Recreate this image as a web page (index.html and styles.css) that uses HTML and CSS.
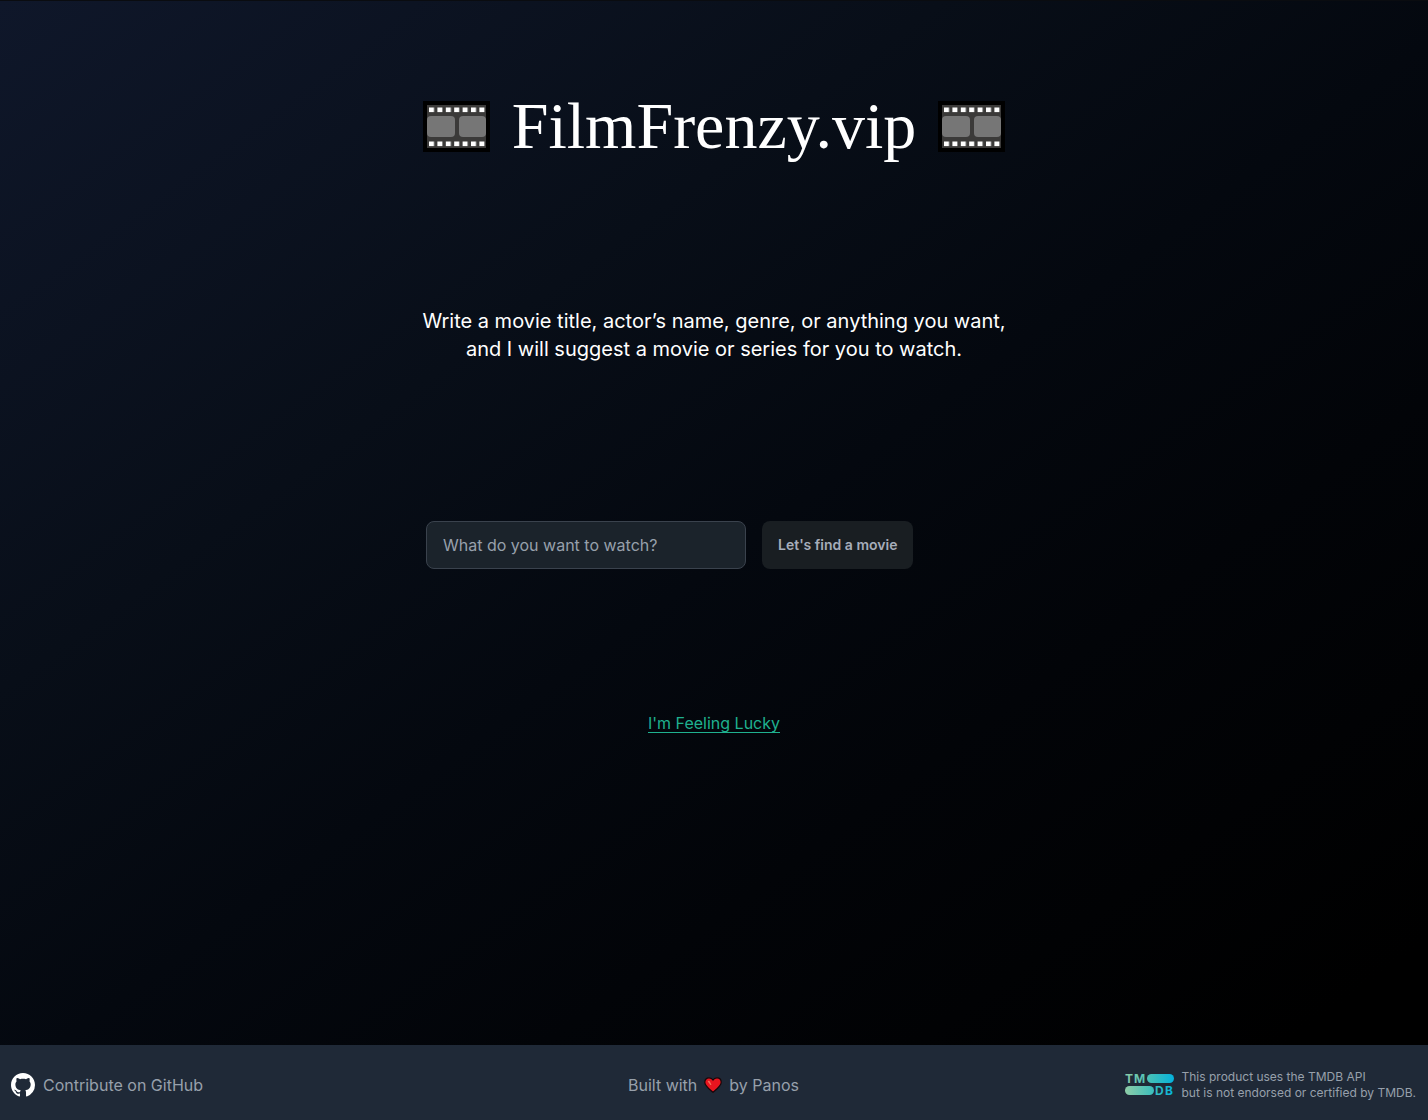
FILE: index.html
```html
<!DOCTYPE html>
<html lang="en">
<head>
<meta charset="utf-8">
<meta name="viewport" content="width=device-width, initial-scale=1">
<title>FilmFrenzy.vip</title>
<link rel="stylesheet" href="styles.css">
</head>
<body>
<svg class="defs" aria-hidden="true">
  <defs>
    <pattern id="holes" width="8.4" height="34" patternUnits="userSpaceOnUse" x="6" y="6">
      <rect width="5" height="4.6" y=".5" fill="#fff"/>
    </pattern>
    <symbol id="film" viewBox="0 0 67 51">
      <rect width="67" height="51" fill="#000"/>
      <rect x="4" y="4" width="59" height="43" fill="#3b3a39"/>
      <rect x="4" y="15" width="28" height="21" rx="4" fill="#767676"/>
      <rect x="36" y="15" width="27" height="21" rx="4" fill="#767676"/>
      <rect x="6" y="6" width="56" height="6" fill="url(#holes)"/>
      <rect x="6" y="40" width="56" height="6" fill="url(#holes)"/>
    </symbol>
    <linearGradient id="tmdb" gradientUnits="userSpaceOnUse" x1="0" y1="0" x2="49" y2="0">
      <stop offset="0" stop-color="#8fcda7"/>
      <stop offset=".56" stop-color="#3dbebb"/>
      <stop offset="1" stop-color="#04b2dd"/>
    </linearGradient>
  </defs>
</svg>
<main class="main">
  <h1 class="title">
    <svg class="film" aria-hidden="true"><use href="#film"/></svg>
    <span>FilmFrenzy.vip</span>
    <svg class="film" aria-hidden="true"><use href="#film"/></svg>
  </h1>
  <p class="intro">Write a movie title, actor’s name, genre, or anything you want,<br>and I will suggest a movie or series for you to watch.</p>
  <form class="search">
    <input class="field" type="text" placeholder="What do you want to watch?" aria-label="What do you want to watch?">
    <button class="find" type="button">Let's find a movie</button>
  </form>
  <a class="lucky" href="#">I'm Feeling Lucky</a>
</main>
<footer class="footer">
  <a class="github" href="#">
    <svg class="mark" viewBox="0 0 16 16" fill="#fff" aria-hidden="true"><path d="M8 0C3.58 0 0 3.58 0 8c0 3.54 2.29 6.53 5.47 7.59.4.07.55-.17.55-.38 0-.19-.01-.82-.01-1.49-2.01.37-2.53-.49-2.69-.94-.09-.23-.48-.94-.82-1.13-.28-.15-.68-.52-.01-.53.63-.01 1.08.58 1.23.82.72 1.21 1.87.87 2.33.66.07-.52.28-.87.51-1.07-1.78-.2-3.64-.89-3.64-3.95 0-.87.31-1.59.82-2.15-.08-.2-.36-1.02.08-2.12 0 0 .67-.21 2.2.82.64-.18 1.32-.27 2-.27s1.36.09 2 .27c1.53-1.04 2.2-.82 2.2-.82.44 1.1.16 1.92.08 2.12.51.56.82 1.27.82 2.15 0 3.07-1.87 3.75-3.65 3.95.29.25.54.73.54 1.48v2.2c0 .21.15.46.55.38A8.01 8.01 0 0 0 16 8c0-4.42-3.58-8-8-8z"/></svg>
    <span>Contribute on GitHub</span>
  </a>
  <p class="built">Built with
    <svg class="heart" viewBox="0 0 18 16" role="img" aria-label="love"><path d="M9 15.2C6.500 13 .8 9.200.8 5.200.8 2.500 2.700.8 5 .8c1.700 0 3.200.8 4 2.200C9.800 1.600 11.300.8 13 .8c2.300 0 4.200 1.700 4.200 4.400 0 4-5.700 7.800-8.200 10z" fill="#e9151f" stroke="#160609" stroke-width="1.200"/><path d="M3.600 4.200q1.400-1 2.200.4l1.600 2.800q-.4 1-1.400 0z" fill="#f4725c"/></svg>
    by Panos</p>
  <div class="credit">
    <svg class="tmdb" viewBox="0 -5 49 32" fill="url(#tmdb)" role="img" aria-label="TMDB logo">
      <text class="logotext" x="0" y="9">T</text>
      <text class="logotext" x="9" y="9">M</text>
      <rect x="22" y="0" width="27" height="9" rx="4.500"/>
      <rect x="0" y="12" width="29" height="9" rx="4.500"/>
      <text class="logotext" x="30" y="21">D</text>
      <text class="logotext" x="40" y="21">B</text>
    </svg>
    <p class="legal">This product uses the TMDB API<br>but is not endorsed or certified by TMDB.</p>
  </div>
</footer>
</body>
</html>
```
FILE: styles.css
```css
* { box-sizing: border-box; }
body {
  margin: 0;
  min-height: 100vh;
  display: flex;
  flex-direction: column;
  font-family: Inter, "Liberation Sans", sans-serif;
  font-size: 16px;
  line-height: 24px;
  color: #fff;
  background: #000;
}
h1, p { margin: 0; }
.defs { position: absolute; width: 0; height: 0; }
.main {
  flex: 1;
  display: flex;
  flex-direction: column;
  align-items: center;
  padding: 95px 16px;
  border-top: 1px solid #0a0c10;
  background: linear-gradient(to bottom right, #0f172a 0%, #080e18 33%, #04080f 52%, #020408 69%, #000 95%);
}
.title {
  display: flex;
  align-items: center;
  gap: 22px;
  font-family: Georgia, "Liberation Serif", serif;
  font-size: 66px;
  line-height: 60px;
  font-weight: 400;
}
.film { width: 67px; height: 51px; }
.intro {
  margin-top: 151px;
  font-size: 20px;
  line-height: 28px;
  text-align: center;
}
.search {
  display: flex;
  gap: 16px;
  width: 576px;
  max-width: 100%;
  margin-top: 158px;
}
.field {
  width: 320px;
  height: 48px;
  padding: 0 16px;
  border: 1px solid #3a424d;
  border-radius: 8px;
  background: #1b232b;
  color: #fff;
  font: inherit;
}
.field::placeholder { color: #97a0ab; opacity: 1; }
.find {
  height: 48px;
  padding: 0 16px;
  border: 0;
  border-radius: 8px;
  background: #191e22;
  color: #a6adba;
  font: 600 14px/20px Inter, "Liberation Sans", sans-serif;
}
.lucky {
  margin-top: 142px;
  color: #1fb18f;
  text-underline-offset: 3px;
}
.footer {
  display: grid;
  grid-template-columns: 1fr auto 1fr;
  align-items: center;
  min-height: 75px;
  padding: 5px 12px 0 11px;
  background: #1f2937;
  color: #97a0ab;
}
.github {
  display: flex;
  align-items: center;
  gap: 8px;
  color: inherit;
  text-decoration: none;
}
.mark { width: 24px; height: 24px; }
.built { display: flex; align-items: center; gap: 7px; }
.heart { width: 18px; height: 16px; }
.credit {
  display: flex;
  align-items: center;
  justify-content: flex-end;
  gap: 8px;
}
.tmdb { width: 49px; height: 32px; overflow: visible; }
.logotext { font-size: 12px; font-weight: 700; }
.legal { font-size: 12px; line-height: 16px; }
```
